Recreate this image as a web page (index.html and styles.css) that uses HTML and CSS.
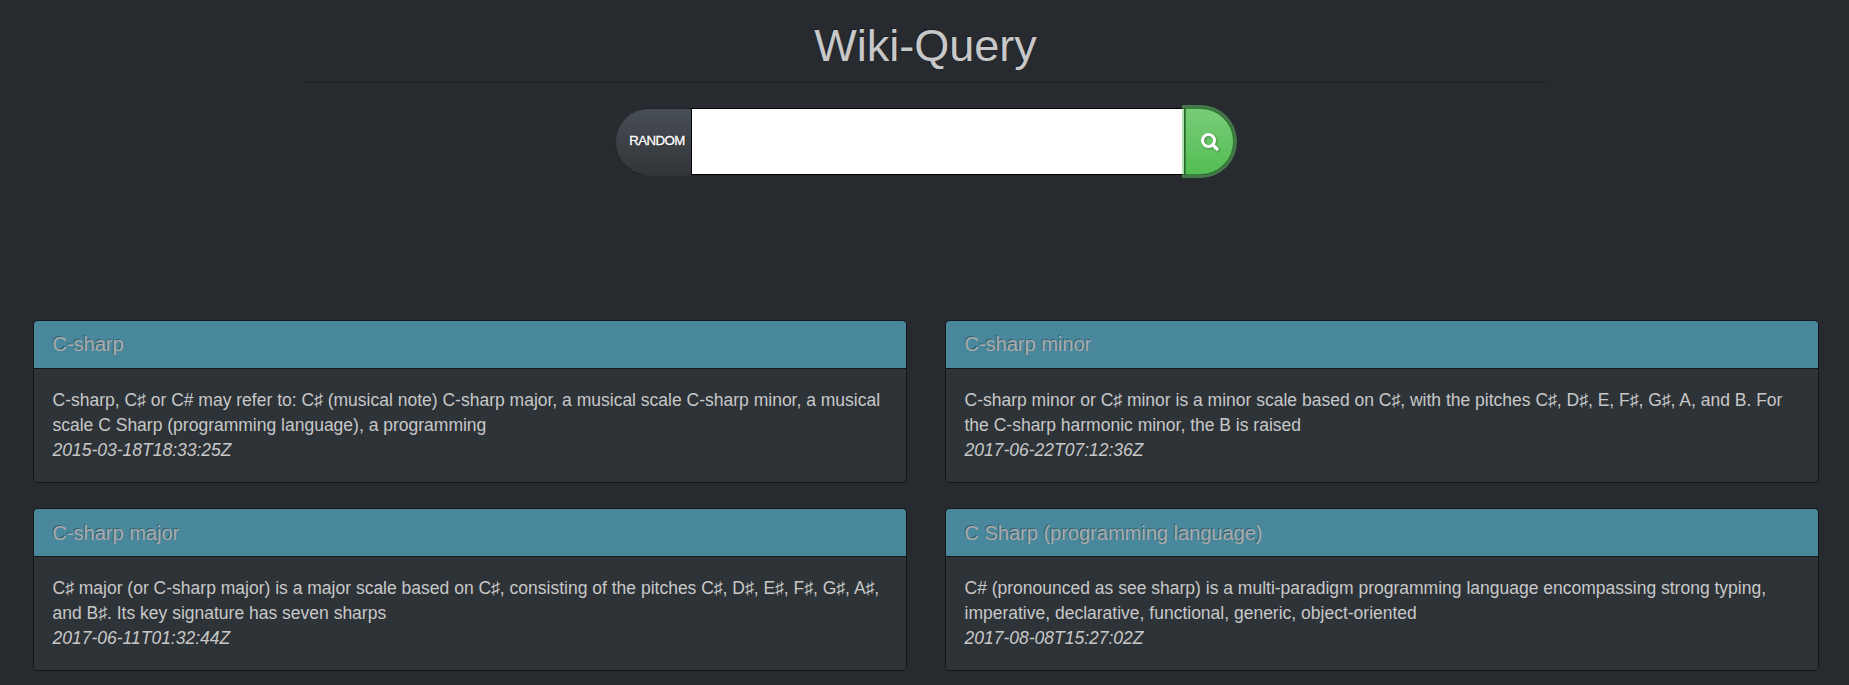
FILE: index.html
```html
<!DOCTYPE html>
<html lang="en">
<head>
<meta charset="utf-8">
<title>Wiki-Query</title>
<link rel="stylesheet" href="styles.css">
</head>
<body>
<header class="page-header"><h1 class="title">Wiki-Query</h1></header>
<form class="search">
  <button type="button" class="btn btn-random"><span class="btn-label">RANDOM</span></button>
  <input type="text" class="search-input" aria-label="Search">
  <button type="button" class="btn btn-search" aria-label="Submit">
    <svg class="icon" viewBox="0 0 18 18"><circle cx="7.5" cy="7.5" r="6" fill="none" stroke="#fff" stroke-width="3"/><path d="M12 12l4 4" stroke="#fff" stroke-width="3.2" stroke-linecap="round"/></svg>
  </button>
</form>
<main class="results">
  <article class="card">
    <h2 class="card-title"><span class="t">C-sharp</span></h2>
    <div class="card-body"><span class="t">C-sharp, C♯ or C# may refer to: C♯ (musical note) C-sharp major, a musical scale C-sharp minor, a musical</span><br><span class="t">scale C Sharp (programming language), a programming</span><br><em class="t">2015-03-18T18:33:25Z</em></div>
  </article>
  <article class="card">
    <h2 class="card-title"><span class="t">C-sharp minor</span></h2>
    <div class="card-body"><span class="t">C-sharp minor or C♯ minor is a minor scale based on C♯, with the pitches C♯, D♯, E, F♯, G♯, A, and B. For</span><br><span class="t">the C-sharp harmonic minor, the B is raised</span><br><em class="t">2017-06-22T07:12:36Z</em></div>
  </article>
  <article class="card">
    <h2 class="card-title"><span class="t">C-sharp major</span></h2>
    <div class="card-body"><span class="t">C♯ major (or C-sharp major) is a major scale based on C♯, consisting of the pitches C♯, D♯, E♯, F♯, G♯, A♯,</span><br><span class="t">and B♯. Its key signature has seven sharps</span><br><em class="t">2017-06-11T01:32:44Z</em></div>
  </article>
  <article class="card">
    <h2 class="card-title"><span class="t">C Sharp (programming language)</span></h2>
    <div class="card-body"><span class="t">C# (pronounced as see sharp) is a multi-paradigm programming language encompassing strong typing,</span><br><span class="t">imperative, declarative, functional, generic, object-oriented</span><br><em class="t">2017-08-08T15:27:02Z</em></div>
  </article>
</main>
</body>
</html>
```
FILE: styles.css
```css
* { box-sizing: border-box; }
body {
  margin: 0;
  height: 685px;
  overflow: hidden;
  background: #272b30;
  color: #c8c8c8;
  font-family: "Liberation Sans", Arial, "DejaVu Sans", sans-serif;
  font-size: 17.5px;
  line-height: 25px;
}
.page-header {
  width: 1241px;
  height: 83px;
  margin: 0 0 0 305px;
  padding-top: 21px;
  border-bottom: 1px solid #1c1e22;
  text-align: center;
}
.title {
  margin: 0;
  font-size: 45px;
  font-weight: 500;
  line-height: 50px;
  text-shadow: -1px -1px 0 rgba(0, 0, 0, .3);
}
.search {
  display: flex;
  width: 619px;
  height: 68px;
  margin: 25px 0 0 615px;
}
.btn {
  display: flex;
  align-items: center;
  justify-content: center;
  padding: 0;
  border: 1px solid rgba(0, 0, 0, .6);
  color: #fff;
  font: 13.3px "Liberation Sans", Arial, sans-serif;
  text-shadow: 1px 1px 1px rgba(0, 0, 0, .3);
}
.btn-random {
  width: 76px;
  border-color: rgba(0, 0, 0, .35);
  border-right: 0;
  border-radius: 34px 0 0 34px;
  background: linear-gradient(#484e55, #3a3f44 60%, #313539);
  padding: 0 0 4px 7px;
}
.btn-label { letter-spacing: -.6px; -webkit-text-stroke: .3px #fff; }
.search-input {
  width: 494px;
  height: 67px;
  padding: 0 16px;
  border: 1px solid #000;
  background: #fff;
  font: inherit;
}
.btn-search {
  position: relative;
  width: 49px;
  height: 67px;
  border-color: #348a34;
  border-radius: 0 34px 34px 0;
  background: linear-gradient(#78cc78, #62c462 60%, #53be53);
  box-shadow: 0 0 0 3px rgba(98, 196, 98, .5);
}
.icon { width: 18px; height: 18px; filter: drop-shadow(1px 1px 1px rgba(0, 0, 0, .3)); }
.results {
  display: grid;
  grid-template-columns: 874px 874px;
  column-gap: 38px;
  row-gap: 25px;
  margin: 144px 0 0 33px;
}
.card {
  height: 163px;
  overflow: hidden;
  border: 1px solid #141618;
  border-radius: 5px;
  background: #2e3338;
}
.card-title {
  height: 48px;
  margin: 0;
  padding: 12px 18px 0 18.5px;
  border-bottom: 1px solid #141618;
  background: #49889c;
  color: #aaa;
  font-size: 20px;
  font-weight: 400;
  line-height: 23px;
  text-shadow: -1px -1px 0 rgba(0, 0, 0, .3);
}
.card:nth-child(n+3) .card-title { padding-top: 13px; }
.card-body { padding: 19px 0 0 18.5px; white-space: nowrap; }
```
